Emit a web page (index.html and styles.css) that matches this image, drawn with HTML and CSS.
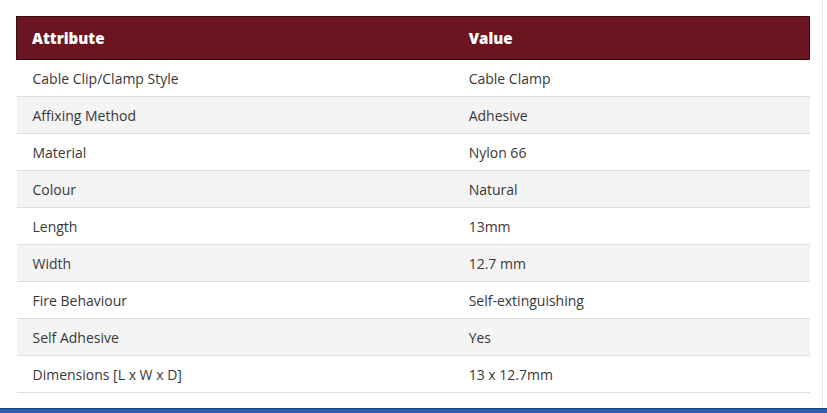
FILE: index.html
```html
<!DOCTYPE html>
<html>
<head>
<meta charset="utf-8">
<link rel="stylesheet" href="styles.css">
</head>
<body>
<div class="page">
  <div class="content">
    <table class="spec">
      <thead>
        <tr><th class="col-a">Attribute</th><th>Value</th></tr>
      </thead>
      <tbody>
        <tr><td>Cable Clip/Clamp Style</td><td>Cable Clamp</td></tr>
        <tr><td>Affixing Method</td><td>Adhesive</td></tr>
        <tr><td>Material</td><td>Nylon 66</td></tr>
        <tr><td>Colour</td><td>Natural</td></tr>
        <tr><td>Length</td><td>13mm</td></tr>
        <tr><td>Width</td><td>12.7 mm</td></tr>
        <tr><td>Fire Behaviour</td><td>Self-extinguishing</td></tr>
        <tr><td>Self Adhesive</td><td>Yes</td></tr>
        <tr><td>Dimensions [L x W x D]</td><td>13 x 12.7mm</td></tr>
      </tbody>
    </table>
  </div>
  <div class="footer-bar"></div>
</div>
</body>
</html>
```
FILE: styles.css
```css
html, body {
  margin: 0;
  padding: 0;
  background: #fff;
}
.page {
  width: 827px;
  height: 413px;
  display: flex;
  flex-direction: column;
  overflow: hidden;
}
.content {
  flex: 1;
  padding: 16px 0 0 16px;
  border-right: 1px solid #ebebeb;
  width: 806px;
  box-sizing: content-box;
}
.spec {
  width: 794px;
  border-collapse: collapse;
  font-family: "Open Sans", "Noto Sans", sans-serif;
  font-size: 14px;
  color: #383838;
}
.spec th {
  background: #6b1520;
  color: #fff;
  font-weight: 800;
  font-size: 15px;
  text-align: left;
  height: 42px;
  padding: 0 16px;
  border-top: 1px solid #3c0a10;
  border-bottom: 1px solid #3c0a10;
}
.spec th:first-child { border-left: 1px solid #3c0a10; padding-left: 15px; }
.spec th:last-child { border-right: 1px solid #3c0a10; }
.spec .col-a { width: 55%; }
.spec td {
  height: 36px;
  padding: 0 16px;
  border-bottom: 1px solid #dedede;
}
.spec tbody tr:nth-child(even) td { background: #f4f4f4; }
.footer-bar {
  height: 4px;
  background: #2f5cae;
  border-top: 1px solid #1e3f7e;
}
```
